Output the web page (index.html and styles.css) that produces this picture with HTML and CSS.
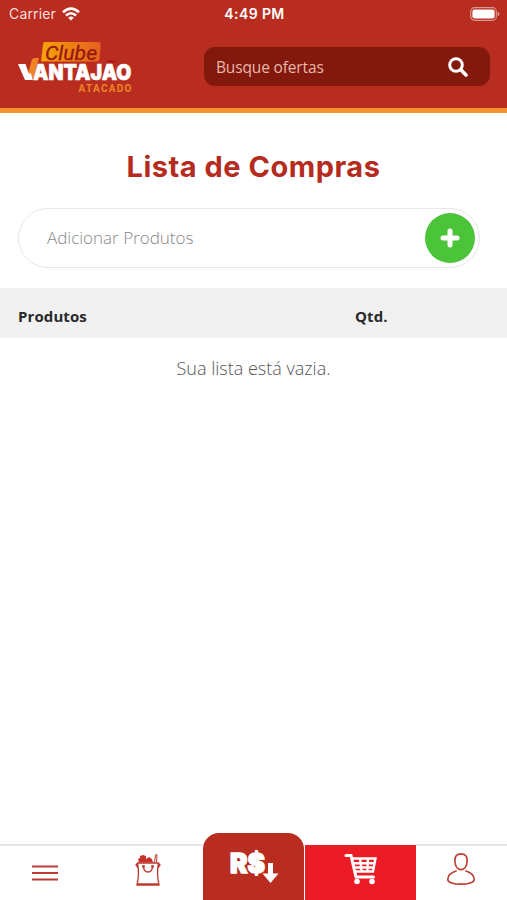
FILE: index.html
```html
<!DOCTYPE html>
<html lang="pt-BR">
<head>
<meta charset="utf-8">
<meta name="viewport" content="width=device-width, initial-scale=1">
<title>Lista de Compras</title>
<link rel="stylesheet" href="styles.css">
</head>
<body>
<div class="app">
  <header class="header">
    <div class="status">
      <div class="carrier"><span class="carrier-name">Carrier</span>
        <svg width="18" height="14" viewBox="0 0 18 14" fill="none" stroke="#fff" stroke-width="2.6"><path d="M1 5.2Q9-2 17 5.2M4 8.5Q9 4 14 8.5"/><path d="M6.2 10.7Q9 8.5 11.8 10.7L9 13.6Z" fill="#fff" stroke="none"/></svg>
      </div>
      <span class="time">4:49 PM</span>
      <svg class="battery" width="30" height="14" viewBox="0 0 30 14"><rect x=".7" y=".7" width="25.6" height="12.6" rx="3.8" fill="none" stroke="#dc968f" stroke-width="1.2"/><rect x="2.4" y="2.4" width="22.2" height="9.2" rx="2.3" fill="#fff"/><path d="M27.6 4.7Q29.6 5.5 29.6 7T27.6 9.3Z" fill="#dc968f"/></svg>
    </div>
    <div class="topbar">
      <svg class="logo" width="116" height="54" viewBox="0 0 116 54">
        <defs><linearGradient id="gold" x1="0" x2="1"><stop offset="0" stop-color="#f5a30b"/><stop offset="1" stop-color="#e65f1f"/></linearGradient></defs>
        <path d="M27 2H80Q83 2 82.700 5L81.500 19Q81 21.500 78 21.500H23L25 4Q25.200 2 27 2Z" fill="url(#gold)"/>
        <text class="logo-club" x="27" y="19.500" textLength="52" lengthAdjust="spacingAndGlyphs">Clube</text>
        <path d="M14 19.500Q15 18 17 18H21L15 40H8Z" fill="#f08423"/>
        <path d="M0 24H7.500L11 34 13 33 14.500 40H7Z" fill="#fff"/>
        <text class="logo-name" x="15" y="40" textLength="98.500" lengthAdjust="spacingAndGlyphs">ANTAJAO</text>
        <path d="M89 22.500Q91 19 95 20.500T98 19L97 22.500Z" fill="#b70d18"/>
        <text class="logo-sub" x="60.500" y="51.500" textLength="53">ATACADO</text>
      </svg>
      <div class="search"><span class="search-text">Busque ofertas</span>
        <svg width="20" height="20" viewBox="0 0 20 20" fill="none" stroke="#fff" stroke-width="3"><circle cx="8" cy="8" r="6.300"/><path d="M12.600 12.600L18 18" stroke-width="3.600" stroke-linecap="round"/></svg>
      </div>
    </div>
  </header>
  <main class="main">
    <h1 class="title">Lista de Compras</h1>
    <div class="add"><span class="add-text">Adicionar Produtos</span>
      <div class="plus"><svg width="20" height="20" viewBox="0 0 20 20" fill="none" stroke="#fff" stroke-width="5" stroke-linecap="round"><path d="M10 3V17M3 10H17"/></svg></div>
    </div>
    <div class="table-head"><span class="products">Produtos</span><span class="qty">Qtd.</span></div>
    <p class="empty">Sua lista está vazia.</p>
  </main>
  <nav class="nav">
    <div class="tab menu"><svg width="28" height="18" viewBox="0 0 28 18" stroke="#bd3b31" stroke-width="2.2"><path d="M1 2.500H27M1 9H27M1 15.500H27"/></svg></div>
    <div class="tab bag"><svg width="26" height="34" viewBox="0 0 26 34" fill="none" stroke="#bd3a30" stroke-width="1.300"><path d="M2.700 10H23.300Q21.500 21 24 32H2Q4.500 21 2.700 10ZM2.700 10L1 12 3.200 15M23.300 10L25 12 22.800 15M2 30.800H24"/><path d="M8.500 13Q8.500 19 13 19T17.500 13"/><circle cx="8.500" cy="13.500" r=".8"/><circle cx="17.500" cy="13.500" r=".8"/><path d="M4 9.500L3 6 5 5 5 3 8 2 11 3 11 6 14 4 17 6 18 9.500Z" fill="#c43229" stroke="none"/><path d="M19.500 9.500L20.500 2 22 1.500 21.500 9.500" stroke-width="1"/></svg></div>
    <div class="offers"><svg width="50" height="38" viewBox="0 0 50 38"><text class="price" x="1" y="25" textLength="35" lengthAdjust="spacingAndGlyphs">R$</text><path d="M39 15H44V25.500H49.500L41.500 35 33.500 25.500H39Z" fill="#fff"/></svg></div>
    <div class="tab cart"><svg width="34" height="32" viewBox="0 0 34 32" fill="none" stroke="#fff" stroke-width="2"><path d="M2 2.500H7L12 24H29.500" stroke-width="3" stroke-linecap="round"/><path d="M8 5.500H31.500L29 18.500H11M9 10.200H30M10 14.500H29M16 5L17.500 18M24 5L23.500 18" stroke-width="2.400"/><circle cx="13" cy="28.500" r="2.800" fill="#fff" stroke="none"/><circle cx="28" cy="28.500" r="2.800" fill="#fff" stroke="none"/></svg></div>
    <div class="tab user"><svg width="30" height="34" viewBox="0 0 30 34" fill="none" stroke="#bd3f35" stroke-width="1.700"><path d="M15 1.800C10.500 1.800 8.700 4.500 8.900 9C9.100 14 11.500 17.600 15 17.600S20.900 14 21.100 9C21.300 4.500 19.500 1.800 15 1.800ZM10.700 18.800C5 20.500 1.800 22.500 1.800 27.500C1.800 30.500 8 32.200 15 32.200S28.200 30.500 28.200 27.500C28.200 22.500 25 20.500 19.300 18.800"/></svg></div>
  </nav>
</div>
</body>
</html>
```
FILE: styles.css
```css
* { box-sizing: border-box; }
body { margin: 0; background: #fff; font-family: "Open Sans", "Noto Sans", sans-serif; }
svg { display: block; flex: none; }
span { white-space: nowrap; }
.app { height: 900px; display: flex; flex-direction: column; overflow: hidden; }
.header { height: 113px; background: #b82d1f; border-bottom: 5px solid #f6922e; }
.status { height: 28px; display: grid; grid-template-columns: 1fr auto 1fr; align-items: center; padding: 0 7px 1px 9px; color: #fff; font-family: Inter, sans-serif; }
.carrier { display: flex; align-items: center; gap: 6px; }
.carrier-name { font-size: 14px; letter-spacing: .15px; color: #f9dfdc; }
.time { font-size: 14px; font-weight: 600; letter-spacing: .4px; }
.battery { justify-self: end; }
.topbar { display: flex; padding: 12px 17px 0 18px; justify-content: space-between; }
.logo-club { font: italic 20px Roboto, sans-serif; fill: #96180f; stroke: #96180f; stroke-width: .3; }
.logo-name { font: 900 22px Inter, sans-serif; fill: #fff; stroke: #fff; stroke-width: .6; }
.logo-sub { font: 700 10px Roboto, sans-serif; fill: #ef8523; }
.search { width: 286px; height: 39px; margin-top: 7px; border-radius: 11px; background: #83180d; display: flex; justify-content: space-between; align-items: center; padding: 0 22px 0 12px; }
.search-text { font-size: 15.5px; color: #eab9a9; letter-spacing: -.15px; }
.main { flex: 1; }
.title { margin: 36px 0 0; text-align: center; font: 700 29px/36px Inter, sans-serif; letter-spacing: .5px; color: #b52c1e; }
.add { height: 60px; margin: 23px 27px 0 18px; border: 1px solid #e8e6e8; border-radius: 30px; display: flex; justify-content: space-between; align-items: center; padding: 0 4px 0 28px; }
.add-text { font-size: 17px; font-weight: 300; color: #888; margin-top: -2px; }
.plus { width: 50px; height: 50px; border-radius: 50%; background: #4bc43a; display: grid; place-items: center; }
.table-head { display: grid; grid-template-columns: 337px 1fr; height: 50px; margin-top: 20px; padding: 5px 18px 0; background: #f1f1f1; align-items: center; color: #29292b; font-size: 15px; font-weight: 700; letter-spacing: .1px; }
.empty { margin: 17px 0 0; text-align: center; font-size: 18px; line-height: 26px; font-weight: 300; color: #555; }
.nav { height: 68px; display: grid; grid-template-columns: 91px 112px 101px 1px 111px 91px; align-items: end; }
.tab { height: 56px; border-top: 2px solid #e7e6e6; display: grid; justify-content: center; }
.menu { padding: 18px 1px 0 0; }
.bag { padding: 7px 0 0 2px; }
.offers { height: 67px; border-radius: 16px 16px 0 0; background: #b82d1f; display: grid; justify-content: center; padding-top: 15px; }
.price { font: 900 27px Inter, sans-serif; fill: #fff; stroke: #fff; stroke-width: 1.4; }
.cart { grid-column: 5; height: 55px; background: #ec1c27; border-top: 0; padding-top: 8px; }
.user { padding: 6px 2px 0 0; }
```
